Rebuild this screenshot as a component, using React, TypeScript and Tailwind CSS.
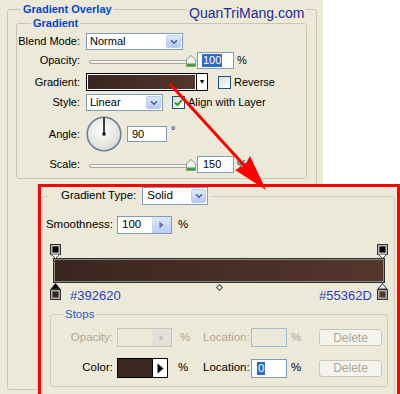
const beige = "bg-[#ece9d8]";

function Chevron() {
  return (
    <svg width="8" height="6" viewBox="0 0 8 6">
      <path d="M1 1.2 L4 4.2 L7 1.2" fill="none" stroke="#4d6185" strokeWidth="1.6" />
    </svg>
  );
}

function Select({ value, w }: { value: string; w: string }) {
  return (
    <div className={`flex h-[17px] ${w} items-center border border-[#7f9db9] bg-white`}>
      <span className="flex-1 pl-[3px] text-[11px] leading-none">{value}</span>
      <span className="m-[1px] flex h-[13px] w-[15px] items-center justify-center rounded-[2px] border border-[#b9cdf6] bg-linear-to-b from-[#e1eafe] to-[#b4c8f6]">
        <Chevron />
      </span>
    </div>
  );
}

function Thumb() {
  return (
    <svg width="10" height="12" viewBox="0 0 10 12" className="absolute left-[100px] top-[0px]">
      <path d="M0.5 4.5 L5 0.5 L9.5 4.5 L9.5 11.5 L0.5 11.5 Z" fill="#f4f7f2" stroke="#8a9a8a" />
      <rect x="1" y="8.5" width="8" height="2.5" fill="#30a640" />
    </svg>
  );
}

function Slider() {
  return (
    <div className="relative h-[12px] w-[111px]">
      <div className="absolute left-[3px] top-[5px] h-[4px] w-[101px] rounded-[2px] border border-[#a7a69d] bg-[#f4f3ee]" />
      <Thumb />
    </div>
  );
}

function Check({ checked }: { checked?: boolean }) {
  return (
    <span className="flex h-[13px] w-[13px] items-center justify-center border border-[#1c5180] bg-linear-to-br from-[#dcdcd4] to-white">
      {checked && (
        <svg width="9" height="9" viewBox="0 0 9 9">
          <path d="M1 4.5 L3.5 7 L8 1.8" fill="none" stroke="#21a121" strokeWidth="2" />
        </svg>
      )}
    </span>
  );
}

function Label({ children }: { children: string }) {
  return <span className="w-[63px] text-right text-[11px] leading-none">{children}</span>;
}

function TopStop() {
  return (
    <svg width="11" height="15" viewBox="0 0 11 15">
      <rect x="0.5" y="0.5" width="10" height="10" fill="#b9b9b9" stroke="#333" />
      <rect x="2.5" y="2.5" width="6" height="6" fill="#000" />
      <path d="M1.5 10.5 L5.5 14.5 L9.5 10.5" fill="#fff" stroke="#444" />
    </svg>
  );
}

function BottomStop({ color, active }: { color: string; active?: boolean }) {
  return (
    <svg width="11" height="17" viewBox="0 0 11 17">
      <path d="M5.5 0.5 L10 6 L1 6 Z" fill={active ? "#000" : "#e8e8e8"} stroke="#333" />
      <rect x="0.5" y="6.5" width="10" height="10" fill="#a9a9a9" stroke="#333" />
      <rect x="2.5" y="8.5" width="6" height="6" fill={color} />
    </svg>
  );
}

function Arrow({ color }: { color: string }) {
  return (
    <svg width="5" height="8" viewBox="0 0 5 8">
      <path d="M0.5 0.5 L4.5 4 L0.5 7.5 Z" fill={color} />
    </svg>
  );
}

export default function App() {
  return (
    <div className="relative h-[394px] w-[400px] overflow-hidden bg-white font-['Liberation_Sans',Arial,sans-serif] text-black">
      {/* layer style dialog */}
      <div className={`h-[394px] w-[323px] ${beige} pl-[7px] pt-[3px]`}>
        <fieldset className="h-[387px] w-[310px] rounded-[3px] border border-[#c9c6b4]">
          <legend className="ml-[13px] px-[2px] text-[11px] font-bold leading-[13px] text-[#0046d5]">
            Gradient Overlay
          </legend>
          <fieldset className="ml-[8px] mt-[1px] w-[291px] rounded-[3px] border border-[#c9c6b4] pb-[5px]">
            <legend className="ml-[14px] px-[2px] text-[11px] font-bold leading-[13px] text-[#0046d5]">
              Gradient
            </legend>

            <div className="mt-[3px] flex h-[17px] items-center">
              <Label>Blend Mode:</Label>
              <div className="ml-[6px]">
                <Select value="Normal" w="w-[97px]" />
              </div>
            </div>

            <div className="mt-[2px] flex h-[17px] items-center">
              <Label>Opacity:</Label>
              <div className="ml-[6px]">
                <Slider />
              </div>
              <div className="flex h-[17px] w-[37px] items-center border border-[#7f9db9] bg-white pl-[4px] text-[11px]">
                <span className="bg-[#316ac5] px-[1px] leading-[13px] text-white">100</span>
              </div>
              <span className="ml-[3px] text-[11px]">%</span>
            </div>

            <div className="mt-[4px] flex h-[18px] items-center">
              <Label>Gradient:</Label>
              <div className="ml-[6px] flex h-[18px] w-[122px] border border-black">
                <div className="flex-1 border border-white bg-linear-to-r from-[#392620] to-[#55362d]" />
                <div className="flex w-[11px] items-center justify-center border-l border-black bg-white text-[7px]">
                  ▼
                </div>
              </div>
              <span className="ml-[10px]">
                <Check />
              </span>
              <span className="ml-[3px] text-[11px]">Reverse</span>
            </div>

            <div className="mt-[3px] flex h-[17px] items-center">
              <Label>Style:</Label>
              <div className="ml-[6px]">
                <Select value="Linear" w="w-[77px]" />
              </div>
              <span className="ml-[9px]">
                <Check checked />
              </span>
              <span className="ml-[3px] text-[11px]">Align with Layer</span>
            </div>

            <div className="mt-[5px] flex h-[36px] items-center">
              <Label>Angle:</Label>
              <svg width="36" height="36" viewBox="0 0 36 36" className="ml-[6px]">
                <defs>
                  <radialGradient id="dial" cx="45%" cy="40%" r="60%">
                    <stop offset="0" stopColor="#ffffff" />
                    <stop offset="1" stopColor="#dcdbd3" />
                  </radialGradient>
                </defs>
                <circle cx="18" cy="18" r="16.8" fill="url(#dial)" stroke="#6c7ea4" strokeWidth="1.6" />
                <line x1="18" y1="18" x2="18" y2="1.5" stroke="#000" strokeWidth="1.5" />
                <rect x="16.5" y="16.5" width="3" height="3" fill="#000" />
              </svg>
              <div className="ml-[5px] flex h-[16px] w-[40px] items-center border border-[#7f9db9] bg-white pl-[4px] text-[11px]">
                90
              </div>
              <span className="mb-[8px] ml-[4px] text-[11px]">°</span>
            </div>

            <div className="mt-[4px] flex h-[17px] items-center">
              <Label>Scale:</Label>
              <div className="ml-[6px]">
                <Slider />
              </div>
              <div className="flex h-[17px] w-[37px] items-center border border-[#7f9db9] bg-white pl-[5px] text-[11px]">
                150
              </div>
              <span className="ml-[3px] text-[11px]">%</span>
            </div>
          </fieldset>
        </fieldset>
      </div>

      {/* watermark */}
      <div className="absolute left-[187px] top-[5px] bg-[#ece9d8] px-[2px] text-[14px] leading-[16px] text-[#1e2b9b]">
        QuanTriMang.com
      </div>

      {/* gradient editor crop */}
      <div className="absolute left-[38px] top-[184px] h-[213px] w-[362px] border-[3px] border-[#ff0000] bg-[#ece9d8] text-[11.5px]">
        <fieldset className="ml-[1px] w-[353px] rounded-[3px] border border-[#cfccbc] pb-[20px]">
          <legend className="ml-[6px] flex h-[18px] items-center pl-[12px] pr-[4px]">
            <span>Gradient Type:</span>
            <div className="ml-[6px] flex h-[18px] w-[66px] items-center border border-[#7f9db9] bg-white">
              <span className="flex-1 pl-[4px]">Solid</span>
              <span className="m-[1px] flex h-[14px] w-[15px] items-center justify-center rounded-[2px] border border-[#b9cdf6] bg-linear-to-b from-[#e1eafe] to-[#b4c8f6]">
                <Chevron />
              </span>
            </div>
          </legend>

          <div className="mt-[11px] flex h-[18px] items-center">
            <span className="w-[70px] text-right">Smoothness:</span>
            <div className="ml-[4px] flex h-[18px] w-[55px] items-center border border-[#7f9db9] bg-white">
              <span className="flex-1 pl-[4px]">100</span>
              <span className="flex h-full w-[19px] items-center justify-center bg-linear-to-b from-[#dbe5fb] to-[#bccdf3]">
                <Arrow color="#5d76a6" />
              </span>
            </div>
            <span className="ml-[6px]">%</span>
          </div>

          <div className="relative mt-[9px] h-[62px] pt-[15px]">
            <div className="ml-[10px] h-[25px] w-[332px] border border-[#2e2e2e] bg-linear-to-r from-[#392620] to-[#55362d] shadow-[inset_0_0_0_1px_#8a8680]" />
            <div className="absolute left-[7px] top-[1px]">
              <TopStop />
            </div>
            <div className="absolute left-[334px] top-[1px]">
              <TopStop />
            </div>
            <div className="absolute left-[7px] top-[40px]">
              <BottomStop color="#392620" active />
            </div>
            <div className="absolute left-[334px] top-[40px]">
              <BottomStop color="#55362d" />
            </div>
            <div className="absolute left-[174px] top-[42px] h-[5px] w-[5px] rotate-45 border border-[#444] bg-white" />
            <span className="absolute left-[27px] top-[45px] text-[13px] leading-[15px] text-[#1f3fc0]">#392620</span>
            <span className="absolute left-[276px] top-[45px] text-[13px] leading-[15px] text-[#1f3fc0]">#55362D</span>
          </div>

          <fieldset className="ml-[7px] mt-[3px] w-[338px] rounded-[3px] border border-[#cfccbc] pb-[8px]">
            <legend className="ml-[12px] px-[2px] leading-[12px] text-[#2a5ad7]">Stops</legend>

            <div className="mt-[8px] flex h-[19px] items-center text-[#aca899]">
              <span className="w-[62px] text-right">Opacity:</span>
              <div className="ml-[4px] flex h-[19px] w-[55px] items-center border border-[#c9c7ba]">
                <span className="flex-1" />
                <span className="flex h-full w-[19px] items-center justify-center bg-[#e4e2d8]">
                  <Arrow color="#c4c2b6" />
                </span>
              </div>
              <span className="w-[31px] pl-[8px]">%</span>
              <span className="w-[48px]">Location:</span>
              <div className="h-[19px] w-[36px] border border-[#a9bbd3]" />
              <span className="w-[32px] pl-[4px]">%</span>
              <div className="flex h-[17px] w-[63px] items-center justify-center rounded-[3px] border border-[#cbc8b8] bg-[#f4f3ee] text-[12px]">
                Delete
              </div>
            </div>

            <div className="mt-[11px] flex h-[20px] items-center">
              <span className="w-[62px] text-right">Color:</span>
              <div className="ml-[4px] flex h-[20px] w-[51px] border border-black">
                <div className="flex-1 bg-[#3b2621]" />
                <div className="flex w-[15px] items-center justify-center border-l border-black bg-white">
                  <svg width="7" height="11" viewBox="0 0 7 11">
                    <path d="M0.5 0.5 L6.5 5.5 L0.5 10.5 Z" fill="#000" />
                  </svg>
                </div>
              </div>
              <span className="w-[35px] pl-[10px]">%</span>
              <span className="w-[48px]">Location:</span>
              <div className="flex h-[19px] w-[36px] items-center border border-[#7f9db9] bg-white pl-[5px]">
                <span className="bg-[#316ac5] px-[1px] leading-[13px] text-white">0</span>
              </div>
              <span className="w-[32px] pl-[4px]">%</span>
              <div className="flex h-[17px] w-[63px] items-center justify-center rounded-[3px] border border-[#cbc8b8] bg-[#f4f3ee] text-[12px] text-[#aca899]">
                Delete
              </div>
            </div>
          </fieldset>
        </fieldset>
      </div>

      {/* red annotation arrow */}
      <svg width="400" height="394" viewBox="0 0 400 394" className="pointer-events-none absolute left-0 top-0">
        <line x1="170" y1="84" x2="252" y2="174" stroke="#ff0000" strokeWidth="3" />
        <path d="M266 190 L235 170 L245 165 L250 156 Z" fill="#ff0000" />
      </svg>
    </div>
  );
}
